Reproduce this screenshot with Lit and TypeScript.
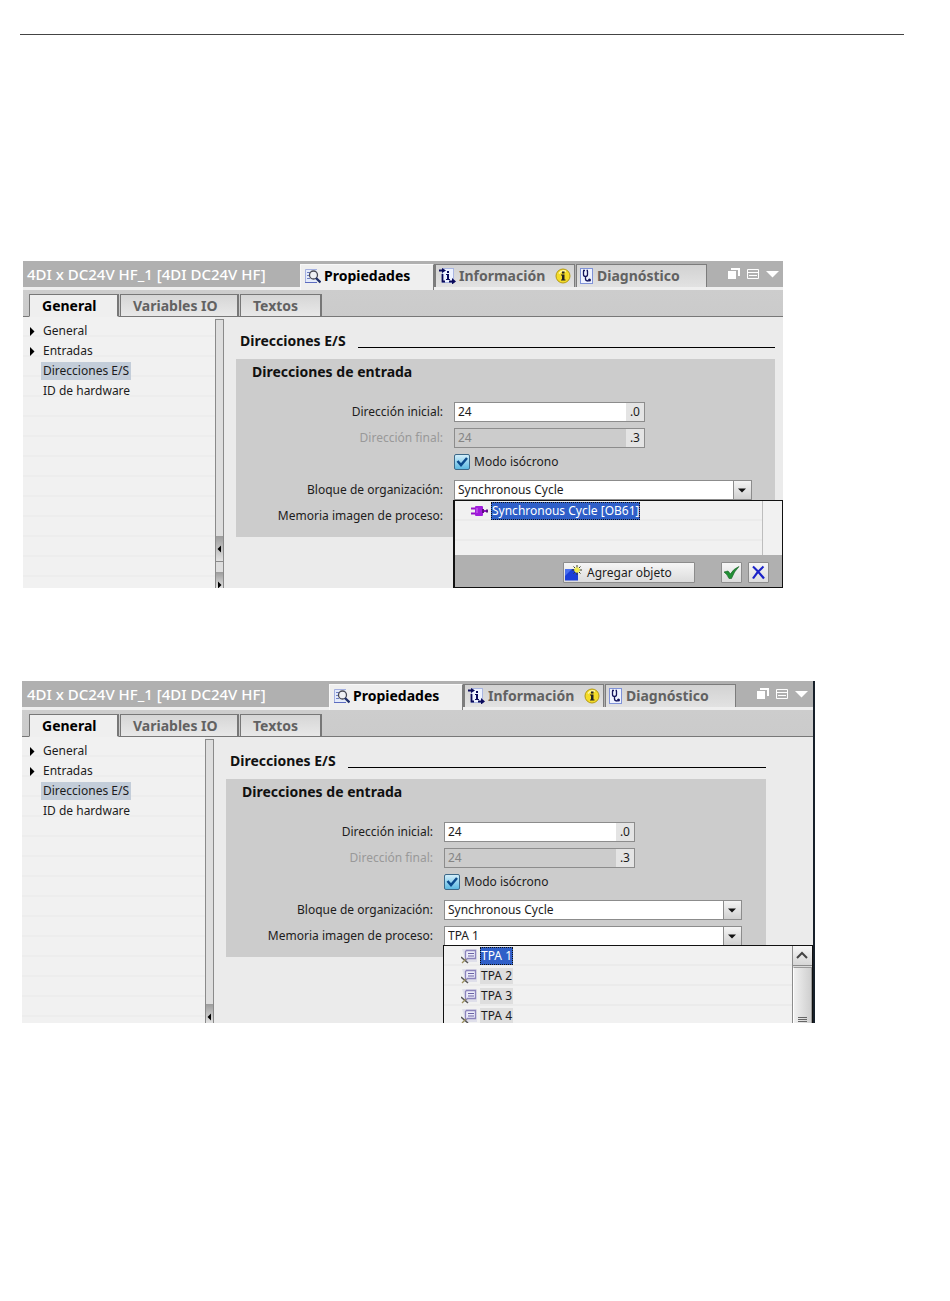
import { LitElement, html, css, svg, nothing } from "lit";
import { customElement, property } from "lit/decorators.js";

const iconProperties = svg`
  <path d="M1 1h12v14H1z" fill="#e4ebfa"/>
  <path d="M1.500 15V1.500H13" stroke="#a3afe0" fill="none"/>
  <path d="M1 14.500h12" stroke="#5c6cc0"/>
  <path d="M3 4.500h3M3 7.500h2M3 10.500h3" stroke="#7080c4"/>
  <circle cx="9.500" cy="7" r="4" fill="#f0f1f4" stroke="#4a4a52" stroke-width="1.300"/>
  <path d="M12 10l4.500 4.500" stroke="#20306a" stroke-width="2.400"/>`;

const iconInfo = svg`
  <rect x="3.500" y="0.500" width="11" height="14" fill="#edf2ff" stroke="#a9b6e2"/>
  <path d="M0 2.500h4" stroke="#0a0a5c" stroke-width="2"/>
  <path d="M3 0l4 2.500-4 2.500z" fill="#0a0a5c"/>
  <rect x="8" y="3" width="2" height="2" fill="#0a0a5c"/>
  <path d="M7 6h3v5h1v1H7v-1h1V7H7z" fill="#0a0a5c"/>
  <path d="M3.500 6v7.500H6M10 13.500h4" stroke="#0a0a5c" stroke-width="1.800" fill="none"/>
  <path d="M13 10l4 3.500-4 3z" fill="#0a0a5c"/>`;

const iconDiagnostics = svg`
  <rect x="0.500" y="0.500" width="12" height="15" fill="#eef2ff" stroke="#7f92d8"/>
  <path d="M3.500 3v3.500q0 2 2 2t2-2V3M3 2.500H5M6.500 2.500h1.500M5.500 8.500V11q0 2 3 2" stroke="#15155c" stroke-width="1.300" fill="none"/>
  <circle cx="9.500" cy="12" r="1.500" fill="#15155c"/>`;

const iconBadge = svg`
  <circle cx="8" cy="8" r="7" fill="#f4dc28" stroke="#b49a14"/>
  <path d="M4 5.500q3-4 7-2" stroke="#fff8a8" stroke-width="1.500" fill="none"/>
  <rect x="7" y="3.500" width="2.500" height="2" fill="#222"/>
  <path d="M6 6.500h3.500v5h1v1H6v-1h1v-4H6z" fill="#222"/>`;

const iconBlock = svg`
  <path d="M0 5.500h5M0 10.500h5M11 8h6" stroke="#9510c8" stroke-width="2"/>
  <rect x="4" y="3" width="8" height="10" rx="1" fill="#a01cdc"/>
  <path d="M6 5v5" stroke="#cf74f2"/>
  <path d="M12 6v4M16 6.500v3" stroke="#5b1080" stroke-width="2"/>`;

const iconTag = svg`
  <path d="M1 1h15v13H5z" fill="#dfdfea"/>
  <path d="M5.500 2.500h9v8h-8l-2 2v-9z" fill="#ececfa" stroke="#8c84bc" stroke-width="1.300"/>
  <path d="M7 5.500h6M7 8h6" stroke="#6a62a4"/>
  <path d="M0 9l7 6" stroke="#555" stroke-width="1.500"/>
  <path d="M1 15l4-4" stroke="#9a8f60" stroke-width="1.300"/>`;

const iconAdd = svg`
  <path d="M1 4h13v11.500H1z" fill="#1c3fd8"/>
  <path d="M1 4h7L1 11z" fill="#4a70ee"/>
  <path d="M13 0v10M8 5h10M9.500 1.500l7 7M16.500 1.500l-7 7" stroke="#3c4020" stroke-width="1"/>
  <path d="M13 2v6M10 5h6M11 3l4 4M15 3l-4 4" stroke="#f2ee50" stroke-width="1.300"/>`;

const icon = (shape: unknown, w = 17, h = 16) =>
  html`<svg class="icon" width=${w} height=${h} viewBox="0 0 ${w} ${h}" aria-hidden="true">${shape}</svg>`;

@customElement("inspector-panel")
class InspectorPanel extends LitElement {
  @property() popup: "block" | "image" = "block";

  static styles = css`
    :host {
      display: block;
      font: 12px/20px "Noto Sans", "Open Sans", sans-serif;
      color: #1c1c1c;
    }
    * { box-sizing: border-box; }
    button, input, select { font: inherit; color: inherit; margin: 0; }
    .icon { display: block; flex: none; }
    .panel {
      display: flex;
      flex-direction: column;
      background: #ebebeb;
      overflow: hidden;
      position: relative;
    }
    .panel.block { height: 327px; }
    .panel.image { height: 342px; border-right: 2px solid #17202a; }

    .titlebar {
      display: flex;
      align-items: flex-end;
      height: 29px;
      flex: none;
      background: linear-gradient(#b0b0b0 26px, #efefef 26px);
    }
    .title {
      flex: 1;
      align-self: flex-start;
      margin: 0;
      padding: 3px 0 0 4px;
      font-size: 15px;
      line-height: 20px;
      font-weight: 500;
      color: #fff;
      white-space: nowrap;
    }
    .image .title { padding-left: 5px; }
    .views { display: flex; height: 26px; }
    .view {
      display: flex;
      align-items: center;
      gap: 3px;
      height: 23px;
      padding: 0 3px;
      border: 1px solid #7c7c7c;
      border-width: 1px 1px 0 1px;
      background: linear-gradient(#d2d2d2, #e2e2e2);
      color: #626262;
      font-size: 14px;
      font-weight: 700;
      text-align: left;
    }
    .view.on {
      height: 26px;
      padding-bottom: 3px;
      width: 134px;
      background: #efefef;
      border-color: #f8f8f8 #7c7c7c #efefef #f8f8f8;
      color: #000;
    }
    .view.info { width: 141px; border-left-width: 2px; }
    .view.diag { width: 131px; margin-left: 1px; }
    .view .label { flex: 1; }
    .tools {
      display: flex;
      align-self: flex-start;
      gap: 5px;
      padding: 6px 4px 0 20px;
    }
    .image .tools { padding-right: 5px; }
    .tool { border: 0; padding: 0; background: none; }

    .tabs {
      display: flex;
      align-items: flex-end;
      gap: 1px;
      height: 27px;
      flex: none;
      padding-left: 6px;
      background: linear-gradient(#cdcdcd, #cbcbcb 26px, #777 26px);
    }
    .image .tabs { padding-left: 7px; }
    .tab {
      height: 23px;
      padding: 0 12px;
      border: 1px solid #777;
      border-right-width: 2px;
      background: linear-gradient(#d6d6d6, #e8e8e8);
      color: #626262;
      font-size: 14px;
      line-height: 20px;
      font-weight: 700;
      text-align: left;
    }
    .tab.on {
      width: 90px;
      background: #efefef;
      border-bottom-color: #efefef;
      color: #000;
    }
    .tab.vars { width: 119px; }
    .tab.texts { width: 82px; }

    .body { display: flex; flex: 1; min-height: 0; }
    .tree {
      width: 192px;
      flex: none;
      margin: 0;
      padding: 4px 0 0;
      list-style: none;
      background: repeating-linear-gradient(#f1f1f1 0 18px, #ededed 18px 20px);
    }
    .image .tree { width: 183px; padding-left: 1px; }
    .node {
      display: flex;
      align-items: center;
      height: 20px;
      padding-left: 7px;
    }
    .arrow { width: 11px; }
    .name { padding: 0 2px; line-height: 18px; color: inherit; text-decoration: none; }
    .name.on { background: #c3cdd9; }

    .splitter {
      display: flex;
      flex-direction: column;
      justify-content: flex-end;
      width: 9px;
      flex: none;
      margin-top: 2px;
      border: 1px solid #8a8a8a;
      border-bottom: 0;
      background: #dedede;
    }
    .grab {
      display: block;
      border: 0;
      padding: 0;
      background: linear-gradient(#9c9c9c, #e2e2e2);
    }
    .grab.left { height: 26px; border-bottom: 1px solid #8a8a8a; }
    .image .grab.left { height: 19px; border: 0; }
    .grab.right { height: 16px; margin-top: 10px; }

    .main { flex: 1; min-width: 0; padding: 14px 8px 0 12px; }
    .image .main { padding-right: 47px; }
    .heading { display: flex; align-items: flex-start; gap: 12px; height: 28px; padding-left: 4px; }
    .heading::after { content: ""; flex: 1; height: 1px; margin-top: 16px; background: #000; }
    h2, h3 { margin: 0; font-size: 14px; line-height: 20px; font-weight: 700; color: #111; }
    .group { padding: 3px 0 11px; background: #cccccc; }
    .group h3 { padding-left: 16px; margin-bottom: 20px; }
    .form {
      display: grid;
      grid-template-columns: 207px 191px;
      grid-auto-rows: 20px;
      gap: 6px 11px;
    }
    .caption { text-align: right; white-space: nowrap; }
    .caption.off { color: #999; }
    .address { display: flex; border: 1px solid #8c8c8c; background: #fff; height: 20px; }
    .address.off { background: #cccccc; }
    .value {
      flex: 1;
      min-width: 0;
      border: 0;
      padding: 0 3px;
      background: none;
      line-height: 18px;
    }
    .value:disabled { color: #858585; }
    .bit { width: 18px; padding-right: 4px; background: #e4e4e4; text-align: right; line-height: 18px; }
    .check { grid-column: 2; display: flex; align-items: center; gap: 4px; height: 16px; }
    .check input {
      appearance: none;
      width: 16px;
      height: 16px;
      border: 1px solid #3c6888;
      border-radius: 2px;
      background: linear-gradient(#d2eefb, #5cb9e2);
      flex: none;
    }
    .box { display: grid; }
    .box > * { grid-area: 1 / 1; }
    .tick { pointer-events: none; z-index: 1; }
    .combo { position: relative; width: 298px; height: 20px; }
    .combo select {
      appearance: none;
      width: 100%;
      height: 20px;
      border: 1px solid #8c8c8c;
      border-radius: 0;
      padding: 0 3px;
      background: #fff;
      line-height: 18px;
    }
    .drop {
      position: absolute;
      top: 1px;
      right: 1px;
      width: 18px;
      height: 18px;
      border-left: 1px solid #8c8c8c;
      background: linear-gradient(#f4f4f4, #d0d0d0);
      pointer-events: none;
    }
    .popup {
      position: absolute;
      z-index: 2;
      left: -1px;
      border: 1px solid #111;
      background: #f1f1f1;
    }
    .popup.objects { top: 20px; width: 330px; height: 88px; border-left-width: 2px; }
    .popup.images { top: 19px; width: 370px; height: 90px; display: flex; }
    .options {
      flex: 1;
      margin: 0;
      padding: 0;
      list-style: none;
      background: repeating-linear-gradient(#f1f1f1 0 18px, #ebebeb 18px 20px);
    }
    .objects .options { height: 54px; margin-right: 19px; border-right: 1px solid #bdbdbd; }
    .option { display: flex; align-items: center; gap: 3px; height: 20px; padding-left: 16px; }
    .images .option { padding-left: 17px; gap: 2px; }
    .option .text { padding: 0 1px; line-height: 18px; }
    .images .text { line-height: 16px; background: #dedede; }
    .option.on .text { line-height: 18px; background: #2f5fc8; color: #fff; outline: 1px dotted #111; outline-offset: -1px; }
    .actions {
      display: flex;
      justify-content: flex-end;
      align-items: center;
      gap: 6px;
      height: 32px;
      padding: 3px 13px 0 0;
      background: #b0b0b0;
    }
    .action {
      display: flex;
      align-items: center;
      justify-content: center;
      width: 21px;
      height: 21px;
      padding: 0;
      border: 1px solid #8c8c8c;
      border-radius: 1px;
      background: linear-gradient(#f6f6f6, #dcdcdc);
    }
    .action.add { width: 132px; justify-content: flex-start; gap: 5px; margin-right: 20px; line-height: 18px; }
    .scroll { width: 20px; border-left: 1px solid #8c8c8c; background: #dadada; }
    .up { display: block; width: 19px; height: 20px; padding: 0; border: 0; border-bottom: 1px solid #8c8c8c; background: linear-gradient(#f6f6f6, #d6d6d6); }
    .thumb { height: 80px; margin-top: 1px; border: 1px solid #9a9a9a; border-left-color: #fff; background: linear-gradient(90deg, #f0f0f0, #cfcfcf); }
  `;

  private combo(id: string, value: string, popup: unknown) {
    return html`<div class="combo">
      <select id=${id}><option>${value}</option></select>
      <span class="drop"><svg class="icon" width="17" height="18" viewBox="0 0 17 18"><path d="M4 7.500h8l-4 4z" fill="#111"/></svg></span>
      ${popup}
    </div>`;
  }

  private objectsPopup() {
    return html`<div class="popup objects">
      <ul class="options" role="listbox" aria-label="Bloque de organización">
        <li class="option on" role="option" aria-selected="true">${icon(iconBlock)}<span class="text">Synchronous Cycle [OB61]</span></li>
      </ul>
      <div class="actions">
        <button class="action add">${icon(iconAdd, 18, 16)}Agregar objeto</button>
        <button class="action" aria-label="Aceptar"><svg class="icon" width="17" height="17" viewBox="0 0 17 17"><path d="M1 8l4-1 2.500 3Q10 5 16 2.500q-5 5-7.500 12H6Q4 10 1 8z" fill="#219035" stroke="#145c22" stroke-width=".6"/></svg></button>
        <button class="action" aria-label="Cancelar"><svg class="icon" width="17" height="17" viewBox="0 0 17 17"><path d="M3 2.500Q8 7 14 14.500M13.500 2.500Q7 8 3 14.500" fill="none" stroke="#1a22c8" stroke-width="2.200"/></svg></button>
      </div>
    </div>`;
  }

  private imagesPopup() {
    return html`<div class="popup images">
      <ul class="options" role="listbox" aria-label="Memoria imagen de proceso">
        ${[1, 2, 3, 4].map(
          (n) => html`<li class="option ${n === 1 ? "on" : ""}" role="option" aria-selected=${n === 1}>${icon(iconTag)}<span class="text">TPA ${n}</span></li>`
        )}
      </ul>
      <div class="scroll">
        <button class="up" aria-label="Subir"><svg class="icon" width="18" height="19" viewBox="0 0 18 19"><path d="M4 12l5-5 5 5" fill="none" stroke="#444" stroke-width="2"/></svg></button>
        <div class="thumb"><svg class="icon" width="17" height="60" viewBox="0 0 17 60"><path d="M4 49.500h9M4 51.500h9M4 53.500h9" stroke="#666"/></svg></div>
      </div>
    </div>`;
  }

  render() {
    const image = this.popup === "image";
    const arrow = html`<svg class="icon" width="5" height="9" viewBox="0 0 5 9"><path d="M0 0l4.500 4.500L0 9z" fill="#000"/></svg>`;
    return html`<section class="panel ${this.popup}">
      <header class="titlebar">
        <h1 class="title">4DI x DC24V HF_1 [4DI DC24V HF]</h1>
        <div class="views">
          <button class="view on">${icon(iconProperties)}<span class="label">Propiedades</span></button>
          <button class="view info">${icon(iconInfo)}<span class="label">Información</span>${icon(iconBadge, 16, 16)}</button>
          <button class="view diag">${icon(iconDiagnostics, 14, 16)}<span class="label">Diagnóstico</span></button>
        </div>
        <div class="tools">
          <button class="tool" aria-label="Restaurar"><svg class="icon" width="14" height="14" viewBox="0 0 14 14"><path d="M4 1h9v8h-2V3H4zM1 4h8v8H1z" fill="#fff"/></svg></button>
          <button class="tool" aria-label="Minimizar"><svg class="icon" width="14" height="14" viewBox="0 0 14 14"><path d="M1.500 2.500h11v9h-11zM1 5.500h12M3 8.500h8" fill="none" stroke="#fff"/></svg></button>
          <button class="tool" aria-label="Contraer"><svg class="icon" width="14" height="14" viewBox="0 0 14 14"><path d="M1 4h13l-6.500 6.500z" fill="#fff"/></svg></button>
        </div>
      </header>
      <nav class="tabs">
        <button class="tab on">General</button>
        <button class="tab vars">Variables IO</button>
        <button class="tab texts">Textos</button>
      </nav>
      <div class="body">
        <ul class="tree">
          <li class="node"><span class="arrow">${arrow}</span><a class="name" href="#">General</a></li>
          <li class="node"><span class="arrow">${arrow}</span><a class="name" href="#">Entradas</a></li>
          <li class="node"><span class="arrow"></span><a class="name on" href="#">Direcciones E/S</a></li>
          <li class="node"><span class="arrow"></span><a class="name" href="#">ID de hardware</a></li>
        </ul>
        <div class="splitter">
          <button class="grab left" aria-label="Ocultar árbol"><svg class="icon" width="7" height="${image ? 19 : 25}" viewBox="0 0 7 ${image ? 19 : 25}"><path d="M5 9.500v7L1.500 13z" fill="#000"/></svg></button>
          ${image
            ? nothing
            : html`<button class="grab right" aria-label="Mostrar árbol"><svg class="icon" width="7" height="16" viewBox="0 0 7 16"><path d="M2 9.500v7L5.500 13z" fill="#000"/></svg></button>`}
        </div>
        <div class="main">
          <div class="heading"><h2>Direcciones E/S</h2></div>
          <div class="group">
            <h3>Direcciones de entrada</h3>
            <div class="form">
              <label class="caption" for="start">Dirección inicial:</label>
              <div class="address"><input class="value" id="start" value="24"><span class="bit">.0</span></div>
              <label class="caption off" for="end">Dirección final:</label>
              <div class="address off"><input class="value" id="end" value="24" disabled><span class="bit">.3</span></div>
              <label class="check"><span class="box"><input type="checkbox" checked><svg class="icon tick" width="16" height="16" viewBox="0 0 16 16"><path d="M3.500 7l3.500 4 6-7" fill="none" stroke="#0b4a8c" stroke-width="2.500"/></svg></span>Modo isócrono</label>
              <label class="caption" for="block">Bloque de organización:</label>
              ${this.combo("block", "Synchronous Cycle", image ? nothing : this.objectsPopup())}
              <label class="caption" for="image">Memoria imagen de proceso:</label>
              ${image ? this.combo("image", "TPA 1", this.imagesPopup()) : nothing}
            </div>
          </div>
        </div>
      </div>
    </section>`;
  }
}

@customElement("app-root")
class AppRoot extends LitElement {
  static styles = css`
    :host { display: block; }
    .page { padding: 34px 46px 278px 20px; background: #fff; }
    .rule { height: 0; margin: 0 0 226px; border: 0; border-top: 1px solid #444; }
    .first { margin: 0 121px 93px 3px; }
    .second { margin: 0 89px 0 2px; }
  `;

  render() {
    return html`<main class="page">
      <hr class="rule">
      <inspector-panel class="first" popup="block"></inspector-panel>
      <inspector-panel class="second" popup="image"></inspector-panel>
    </main>`;
  }
}
